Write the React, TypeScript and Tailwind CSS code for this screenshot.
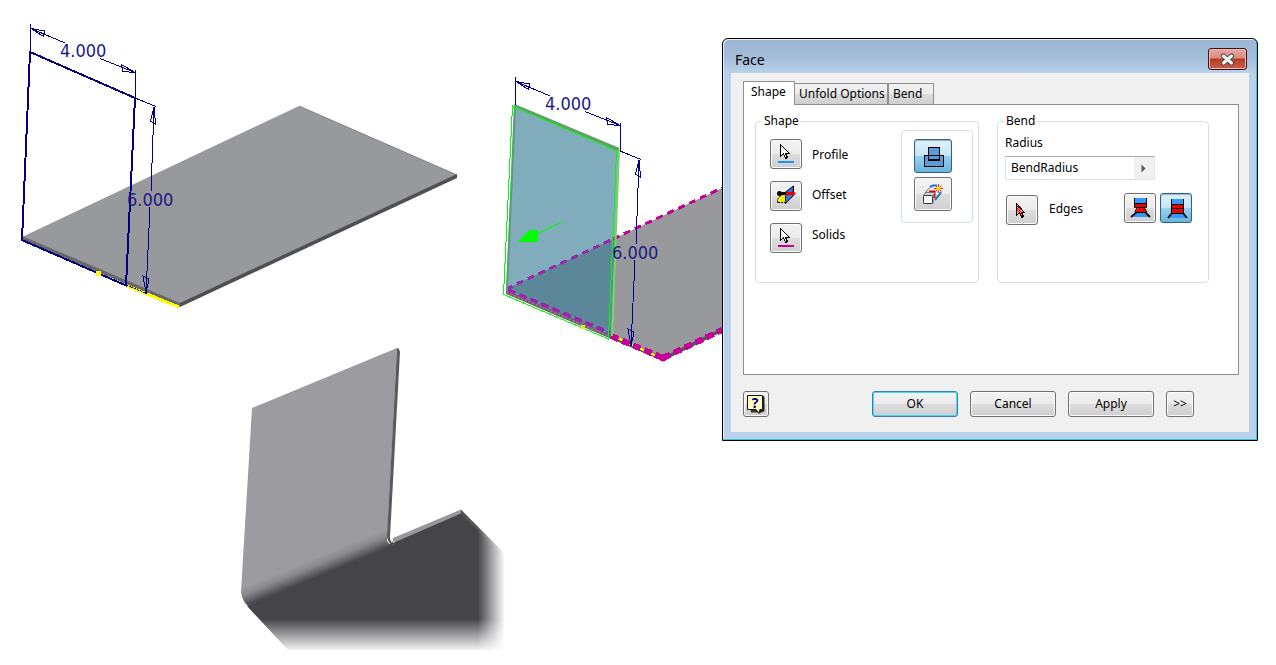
import { useState } from 'react';
import type { ReactNode } from 'react';
import clsx from 'clsx';

const plain =
    'border-[#707070] bg-[linear-gradient(#f3f3f3_0%,#ebebeb_50%,#dddddd_50%,#cfcfcf_100%)] shadow-[inset_0_0_0_1px_#fafafa]';
const pressed =
    'border-[#2c628b] bg-[linear-gradient(#dff1fb_0%,#c4e5f6_50%,#98d1ef_50%,#6fb3da_100%)] shadow-[inset_0_1px_1px_#9eb0ba]';

type IconButtonProps = {
    id?: string;
    title: string;
    active?: boolean;
    large?: boolean;
    onClick?: () => void;
    children: ReactNode;
};

function IconButton({ id, title, active, large, onClick, children }: IconButtonProps) {
    return (
        <button
            id={id}
            type="button"
            aria-label={title}
            onClick={onClick}
            className={clsx(
                'grid shrink-0 place-items-center rounded-[3px] border',
                large ? 'h-[34px] w-[38px]' : 'h-[30px] w-8',
                active ? pressed : plain,
            )}
        >
            {children}
        </button>
    );
}

function CursorIcon({ underline }: { underline: string }) {
    return (
        <svg width="30" height="28" shapeRendering="crispEdges">
            <path d="M9.5 4.5v12l3-3 2 5 2-1-2-4h4z" fill="#fff" stroke="#000" />
            <rect x="7" y="21" width="16" height="2" fill={underline} />
        </svg>
    );
}

function EdgeCursorIcon() {
    return (
        <svg width="30" height="28" shapeRendering="crispEdges">
            <path d="M9.5 7.5v12l3-3 2 5 2-1-2-4h3z" fill="#f8a8a8" stroke="#100000" />
            <path d="M10 10.500h1M11 11.500h1M10 12.500h1M12 12.500h1M11 13.500h1M13 13.500h1M10 14.500h1M12 14.500h1M11 15.500h1M13 15.500h1M13 17.500h1M14 19.500h1" stroke="#e00000" />
        </svg>
    );
}

function OffsetIcon() {
    return (
        <svg width="30" height="28">
            <path d="M14.500 10 22.500 4v9.500l-8 8z" fill="#2f74e0" stroke="#000" />
            <path d="M6.500 20.500v-3l4-5h4v8z" fill="#f5ea14" stroke="#000" strokeDasharray="2 1" />
            <circle cx="8.500" cy="11.500" r="2.500" fill="#000" />
            <path d="M8 10h7v3H8z" fill="#000" />
            <path d="M15 10h6V8.500l4 3-4 3V13h-6z" fill="#e80000" />
        </svg>
    );
}

function UnionIcon() {
    return (
        <svg width="36" height="32" shapeRendering="crispEdges">
            <path d="M13.500 7.500h11v8h4v11h-19v-11h4z" fill="#5b9bdb" />
            <path d="M13.500 7.500h11v13h-11z" fill="none" stroke="#000" />
            <path d="M9.500 15.500h19v11h-19z" fill="none" stroke="#000" />
            <path d="M14 19.500h11" stroke="#000" />
        </svg>
    );
}

function NewSolidIcon() {
    return (
        <svg width="36" height="32">
            <path d="M9.500 15.500 15 9.500" fill="none" stroke="#667" />
            <path d="M15 9 18 7.500h4M20 22l5-6 1-2" fill="none" stroke="#2678c8" strokeWidth="2" />
            <path d="M14 13.500h5.500V20" fill="none" stroke="#f00000" strokeWidth="2" />
            <path d="M8.500 17.500 11 14.500h9l-2 3v8h-9.500z" fill="#d5d5d5" stroke="#777" />
            <rect x="8.500" y="17.500" width="9" height="8" rx="1" fill="#fafafa" stroke="#333" />
            <path d="M23.500 6v9M19 10.500h9M20.500 7.500l6 6M26.500 7.500l-6 6" stroke="#e02010" />
            <circle cx="23.500" cy="10.500" r="2" fill="#ffd000" />
        </svg>
    );
}

function TrimmedBendIcon() {
    return (
        <svg width="30" height="28">
            <path d="M9 4h13v5H9z" fill="#3399ff" />
            <path d="M12 18h8l5 5H6z" fill="#3399ff" />
            <path d="M9 9h13v4H9z" fill="#f00000" />
            <path d="M13 13.500h6l2.500 4.500h-11z" fill="#f00000" />
            <path d="M9.500 4v9.500h12V4M9 9.500h13M12 13.500l-2 4.500M19 13.500l3 4.500M11 18.500h9" fill="none" stroke="#000" />
            <path d="M12 18l-6 5M20 18l5 5" stroke="#111" strokeWidth="2" />
        </svg>
    );
}

function StraightBendIcon() {
    return (
        <svg width="30" height="28">
            <path d="M11 5h11v5H11z" fill="#3399ff" />
            <path d="M11 19h11l4 5H7z" fill="#3399ff" />
            <path d="M11 10h11v9H11z" fill="#f00000" />
            <path d="M10.500 5v14.500h12V5M11 10.500h11M11 14.500h11" fill="none" stroke="#000" />
            <path d="M11 19l-4 5M22 19l4 5" stroke="#111" strokeWidth="2" />
        </svg>
    );
}

function DimensionArrows() {
    return (
        <g fill="none" stroke="#000080" shapeRendering="crispEdges">
            <path d="M30.500 24v28M135.500 70v28M31 28.500 65 43M100 58.500 135 72.500M135 98l21 8.500" />
            <path d="M154 107 151 192M150 207 146 293" />
            <path d="M31 28.500 44.500 31l-1 5.500zM135 72.500 121.500 64.500l1 7zM154 107l-3.500 14 5 3zM146 293l-3-17 6 3z" />
        </g>
    );
}

function Scene() {
    return (
        <svg
            viewBox="0 0 722 665"
            className="block h-auto w-full"
            role="img"
            aria-label="Sheet metal face preview"
            fontFamily="'DejaVu Sans Condensed', 'Noto Sans', sans-serif"
            fontSize="18"
        >
            <defs>
                <linearGradient id="bend" gradientUnits="userSpaceOnUse" x1="240" y1="589" x2="247" y2="606">
                    <stop offset="0" stopColor="#9c9ba0" />
                    <stop offset="0.400" stopColor="#88878b" />
                    <stop offset="1" stopColor="#454449" />
                </linearGradient>
                <linearGradient id="fadeRight">
                    <stop offset="0" stopColor="#fff" stopOpacity="0" />
                    <stop offset="0.900" stopColor="#fff" />
                </linearGradient>
                <linearGradient id="fadeDown" x2="0" y2="1">
                    <stop offset="0" stopColor="#fff" stopOpacity="0" />
                    <stop offset="0.950" stopColor="#fff" />
                </linearGradient>
            </defs>

            {/* sketch on the base plate */}
            <path d="M22 237 299 106 457 175 180 304z" fill="#98999d" />
            <path d="M299 106 457 175" stroke="#808085" />
            <path d="M22 236 180 303v4L22 240z" fill="#68686b" />
            <path d="M180 303 457 174v4L180 307z" fill="#505054" />
            <path d="M127 286 179 307" stroke="#ff0" strokeWidth="3" shapeRendering="crispEdges" />
            <path d="M126 285 148 294" stroke="#000080" strokeDasharray="2 1" shapeRendering="crispEdges" />
            <path
                d="M30 52 22 240 126 285.500 135 98z"
                fill="none"
                stroke="#000080"
                strokeWidth="2"
                shapeRendering="crispEdges"
            />
            <rect x="96" y="271" width="5" height="5" fill="#ff0" />
            <DimensionArrows />
            <g fill="#1a1a85">
                <text x="60" y="57">4.000</text>
                <text x="127" y="206">6.000</text>
            </g>

            {/* face preview, material direction and picked edges */}
            <path d="M506 289 722 188v142l-59 29z" fill="#98999d" />
            <path d="M506 290 663 357 722 328v4l-59 29-157-67z" fill="#555559" />
            <path d="M613 336 663 359" stroke="#ff0" strokeWidth="2" />
            <g fill="none" stroke="#c8009a" shapeRendering="crispEdges">
                <path d="M613 239 722 188" strokeWidth="3" strokeDasharray="7 5" />
                <path d="M611 336 663 358" strokeWidth="6" strokeDasharray="8 4" />
                <path d="M663 358 722 330" strokeWidth="6" strokeDasharray="8 4" />
            </g>
            <path d="M514 106 619 150 611 338 506 291z" fill="#397d94" fillOpacity="0.640" />
            <path d="M506 289 613 239" stroke="#9c24ae" strokeWidth="3" strokeDasharray="7 5" shapeRendering="crispEdges" />
            <path d="M508 290 610 333" stroke="#9c24ae" strokeWidth="4" strokeDasharray="8 4" shapeRendering="crispEdges" />
            <path d="M506 292 609 336" stroke="#9e6d80" strokeWidth="2" strokeDasharray="3 1" />
            <path d="M515 106 507 290" stroke="#589e76" strokeWidth="2" />
            <path d="M514 105.500 619 149.500" stroke="#679d6c" strokeWidth="3" />
            <path d="M619 150 612 336" stroke="#80d069" strokeWidth="2" />
            <path
                d="M512.500 106 503.500 294.500 608.500 339 616.500 151z"
                fill="none"
                stroke="#00ff00"
                shapeRendering="crispEdges"
            />
            <g stroke="#00ff00" shapeRendering="crispEdges">
                <path d="M563 221.500 536 234.500" />
                <path d="M519 241.500 530 230.500 536 230l2 5-1 6z" fill="#00ff00" />
            </g>
            <rect x="581" y="325" width="4" height="4" fill="#d8ee00" />
            <g transform="translate(485 53)">
                <DimensionArrows />
            </g>
            <g fill="#1a1a85">
                <text x="545" y="110">4.000</text>
                <text x="612" y="259">6.000</text>
            </g>
            <circle cx="663" cy="358" r="3.500" fill="#c8009a" />

            {/* resulting bent part */}
            <path d="M247 606 288 650H505V555L461 511 393 541 387 546z" fill="#454449" />
            <path d="M393 538 461 509.500v4L393 543z" fill="#98979c" />
            <path d="M461 509.500 505 554v4L461 514z" fill="#555558" />
            <path d="M252 408 397 348 387 541 391 546 248 606Q242 601 241 592z" fill="url(#bend)" />
            <path d="M397 348q2 0 3 4l-10 185q0 5 4 7v2q-7-3-7-10z" fill="#5b5b5e" />
            <path d="M391 538l3 5" stroke="#fff" />
            <rect x="478" y="509" width="30" height="145" fill="url(#fadeRight)" />
            <rect x="240" y="619" width="270" height="35" fill="url(#fadeDown)" />
        </svg>
    );
}

const tabs = [
    { name: 'Shape', width: 'w-[52px]' },
    { name: 'Unfold Options', width: 'w-[94px]' },
    { name: 'Bend', width: 'w-[46px]' },
];

const groupBox = 'h-[170px] rounded-[4px] border border-[#d5dfe5]';

function FaceDialog() {
    const [tab, setTab] = useState('Shape');
    const [solid, setSolid] = useState('join');
    const [bend, setBend] = useState('straight');
    const [radius, setRadius] = useState('BendRadius');

    return (
        <section
            role="dialog"
            aria-labelledby="dialog-title"
            className="mt-[38px] w-[42%] min-w-[536px] shrink-0 rounded-t-[6px] border border-black bg-[linear-gradient(#9bb6d3_0px,#a3bcd8_18px,#b9d1ea_34px)] px-2 pb-2 shadow-[inset_-1px_-1px_0_#35c3df,inset_1px_1px_0_#e6f1fa]"
        >
            <header className="flex h-[34px] items-start justify-between pr-[2px] pl-1">
                <h1 id="dialog-title" className="pt-[11px] text-[14px] leading-5">
                    Face
                </h1>
                <button
                    type="button"
                    aria-label="Close"
                    className="mt-[9px] grid h-[22px] w-[39px] place-items-center rounded-[3px] border border-[#43121c] bg-[linear-gradient(#e8a8a0_0%,#dc8b80_45%,#b83a22_50%,#c9604a_100%)] shadow-[inset_0_0_0_1px_#eeb9b0]"
                >
                    <svg width="15" height="13">
                        <path d="M3.500 3 11.500 10M11.500 3 3.500 10" stroke="#4d4d55" strokeWidth="5" strokeLinecap="round" />
                        <path d="M3.500 3 11.500 10M11.500 3 3.500 10" stroke="#f4f4f4" strokeWidth="3" strokeLinecap="round" />
                    </svg>
                </button>
            </header>

            <div className="bg-[#f0f0f0] pt-2 pr-[10px] pb-[15px] pl-3">
                <div role="tablist" className="flex h-[23px] items-end">
                    {tabs.map(({ name, width }) => (
                        <button
                            key={name}
                            type="button"
                            role="tab"
                            aria-selected={tab === name}
                            onClick={() => setTab(name)}
                            className={clsx(
                                'border border-b-0 border-[#8c8e94] text-left whitespace-nowrap',
                                width,
                                tab === name
                                    ? 'relative -mb-px h-6 bg-white pb-1 pl-[7px]'
                                    : '-ml-px h-[21px] bg-[linear-gradient(#f2f2f2_0%,#ebebeb_50%,#dddddd_50%,#cfcfcf_100%)] pl-1 last:ml-0',
                            )}
                        >
                            {name}
                        </button>
                    ))}
                </div>

                <div
                    role="tabpanel"
                    className="flex h-[271px] items-start gap-[18px] border border-[#8c8e94] bg-white pt-2 pr-[29px] pl-[11px]"
                >
                    <fieldset className={clsx(groupBox, 'flex grow-[224] basis-[224px] items-start pr-[5px] pl-[14px]')}>
                        <legend className="-ml-2 px-[2px] leading-4">Shape</legend>
                        <div className="mt-[10px] flex flex-col gap-3">
                            <IconButton id="profile" title="Profile">
                                <CursorIcon underline="#1e90ff" />
                            </IconButton>
                            <IconButton id="offset" title="Offset">
                                <OffsetIcon />
                            </IconButton>
                            <IconButton id="solids" title="Solids">
                                <CursorIcon underline="#c8009a" />
                            </IconButton>
                        </div>
                        <div className="mt-[18px] ml-[10px] flex flex-col gap-6 leading-4">
                            <label htmlFor="profile">Profile</label>
                            <label htmlFor="offset">Offset</label>
                            <label htmlFor="solids">Solids</label>
                        </div>
                        <div className="mt-px ml-auto flex h-[93px] w-[72px] flex-col items-center gap-1 rounded-[4px] border border-[#d5dfe5] pt-2 pr-2">
                            <IconButton large title="Join" active={solid === 'join'} onClick={() => setSolid('join')}>
                                <UnionIcon />
                            </IconButton>
                            <IconButton large title="New solid" active={solid === 'new'} onClick={() => setSolid('new')}>
                                <NewSolidIcon />
                            </IconButton>
                        </div>
                    </fieldset>

                    <fieldset className={clsx(groupBox, 'grow-[212] basis-[212px] pr-4 pl-[7px]')}>
                        <legend className="-ml-px px-[2px] leading-4">Bend</legend>
                        <label htmlFor="radius" className="mt-[6px] block leading-4">
                            Radius
                        </label>
                        <div className="mt-[5px] flex h-6 w-[150px] border border-[#e2e3ea] border-t-[#abadb3]">
                            <input
                                id="radius"
                                type="text"
                                value={radius}
                                onChange={(e) => setRadius(e.target.value)}
                                className="w-full min-w-0 bg-white px-[5px] leading-4 outline-none"
                            />
                            <button type="button" aria-label="Radius options" className="grid w-5 shrink-0 place-items-center bg-[#f0f0f0]">
                                <svg width="6" height="9">
                                    <path d="M.5.500v8l4-4z" fill="#55585c" />
                                </svg>
                            </button>
                        </div>
                        <div className="mt-[13px] flex h-8 items-start">
                            <div className="flex h-full items-end pl-px">
                                <IconButton id="edges" title="Edges">
                                    <EdgeCursorIcon />
                                </IconButton>
                            </div>
                            <label htmlFor="edges" className="mt-2 ml-[11px] leading-4">
                                Edges
                            </label>
                            <div className="ml-auto flex gap-1">
                                <IconButton title="Trimmed bend" active={bend === 'trimmed'} onClick={() => setBend('trimmed')}>
                                    <TrimmedBendIcon />
                                </IconButton>
                                <IconButton title="Straight bend" active={bend === 'straight'} onClick={() => setBend('straight')}>
                                    <StraightBendIcon />
                                </IconButton>
                            </div>
                        </div>
                    </fieldset>
                </div>

                <footer className="mt-4 flex gap-3 pr-[45px]">
                    <button
                        type="button"
                        aria-label="Help"
                        className={clsx('mr-auto grid h-[26px] w-[26px] place-items-center rounded-[3px] border', plain)}
                    >
                        <svg width="20" height="20">
                            <path d="M3 3.500 4.500 2H18v14.500l-2 2H5z" fill="#333" />
                            <path d="M1.500 1.500h15v14H14l-1 4-3-4H1.500z" fill="#fffbc0" stroke="#111" />
                            <path d="M17.500 3v13.500h-3l-1 2" fill="none" stroke="#222" strokeWidth="2" />
                            <text x="9" y="14" textAnchor="middle" fontSize="14" fontWeight="bold" fill="#000080">
                                ?
                            </text>
                        </svg>
                    </button>
                    <button
                        type="button"
                        className="h-[26px] w-[86px] rounded-[3px] border border-[#3c7fb1] bg-[linear-gradient(#f3f3f3_0%,#ebebeb_50%,#dddddd_50%,#cfcfcf_100%)] shadow-[inset_0_0_0_1px_#46d8fb]"
                    >
                        OK
                    </button>
                    <button type="button" className={clsx('h-[26px] w-[86px] rounded-[3px] border', plain)}>
                        Cancel
                    </button>
                    <button type="button" className={clsx('h-[26px] w-[86px] rounded-[3px] border', plain)}>
                        Apply
                    </button>
                    <button type="button" aria-label="More options" className={clsx('h-[26px] w-7 rounded-[3px] border', plain)}>
                        &gt;&gt;
                    </button>
                </footer>
            </div>
        </section>
    );
}

export default function App() {
    return (
        <main className="flex items-start bg-white pr-[18px] font-['Noto_Sans',sans-serif] text-[12px] text-black">
            <div className="min-w-0 flex-1">
                <Scene />
            </div>
            <FaceDialog />
        </main>
    );
}
